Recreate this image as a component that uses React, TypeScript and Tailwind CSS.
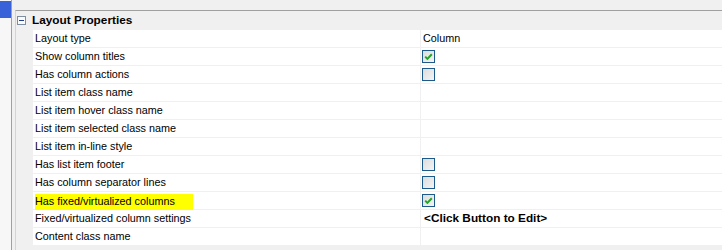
import React from "react";

type Row = {
  name: string;
  value?: string;
  check?: boolean;
  bold?: boolean;
  mark?: boolean;
};

const rows: Row[] = [
  { name: "Layout type", value: "Column" },
  { name: "Show column titles", check: true },
  { name: "Has column actions", check: false },
  { name: "List item class name" },
  { name: "List item hover class name" },
  { name: "List item selected class name" },
  { name: "List item in-line style" },
  { name: "Has list item footer", check: false },
  { name: "Has column separator lines", check: false },
  { name: "Has fixed/virtualized columns", check: true, mark: true },
  { name: "Fixed/virtualized column settings", value: "<Click Button to Edit>", bold: true },
  { name: "Content class name" },
];

function CheckBox({ checked }: { checked: boolean }) {
  return (
    <div className="w-[13px] h-[13px] border border-[#1c5a8c] bg-gradient-to-br from-[#dcdcdc] to-[#f4f4f4] flex items-center justify-center">
      {checked && (
        <svg width="11" height="11" viewBox="0 0 11 11">
          <path d="M2.2 5.6 L4.4 7.9 L8.8 3.2" fill="none" stroke="#21a427" strokeWidth="2" />
        </svg>
      )}
    </div>
  );
}

export default function App() {
  return (
    <div className="w-[722px] h-[250px] flex bg-[#f0f0f0] overflow-hidden text-black font-['Liberation_Sans',Arial,sans-serif]">
      <div className="w-[12px] flex flex-col bg-[#f7f7f7] border-r border-[#a0a0a0]">
        <div className="mt-px h-[17px] bg-[#3a62d8]" />
      </div>

      <div className="flex-1 flex flex-col pt-[10px]">
        <div className="ml-[3px] flex-1 flex flex-col border-t border-l border-t-[#a0a0a0] border-l-[#d4d4d4]">
          <div className="h-[19px] flex items-center pl-px">
            <div className="w-[9px] h-[9px] border border-[#7d8ea3] bg-[#fafafa] flex items-center justify-center">
              <div className="w-[5px] h-px bg-[#1f3f8c]" />
            </div>
            <span className="ml-[6px] text-[11.8px] font-bold leading-none">Layout Properties</span>
          </div>

          {rows.map((r) => (
            <div key={r.name} className="h-[17px] mb-px flex gap-px text-[10.8px] leading-none">
              <div className="w-[16px] shrink-0" />
              <div className="w-[387px] shrink-0 bg-white flex items-center pl-[2px]">
                <span className={r.mark ? "bg-[#ffff00] h-[16px] pr-[18px] flex items-center mt-[2px]" : ""}>
                  {r.name}
                </span>
              </div>
              <div className="flex-1 bg-white flex items-center pl-px">
                {r.check !== undefined ? (
                  <CheckBox checked={r.check} />
                ) : r.value ? (
                  <span className={r.bold ? "pl-[2px] text-[11.8px] font-bold" : "pl-px"}>{r.value}</span>
                ) : null}
              </div>
            </div>
          ))}
        </div>
      </div>
    </div>
  );
}
